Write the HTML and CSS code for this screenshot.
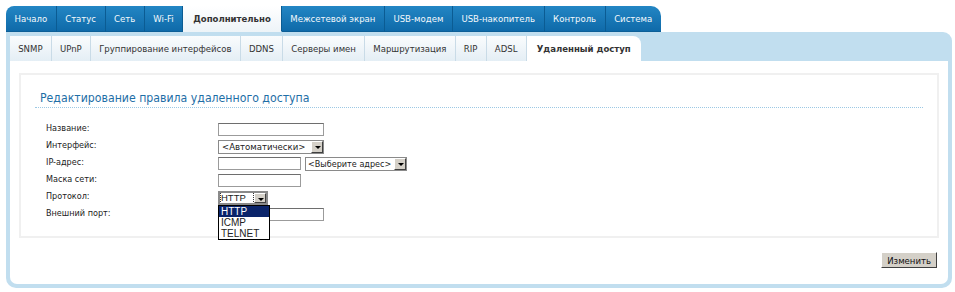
FILE: index.html
```html
<!DOCTYPE html>
<html lang="ru">
<head>
    <meta charset="UTF-8">
    <title>Удаленный доступ</title>
    <link rel="stylesheet" href="styles.css">
</head>
<body>
    <div class="page">
        <ul class="menu">
            <li>Начало</li>
            <li>Статус</li>
            <li>Сеть</li>
            <li>Wi-Fi</li>
            <li class="active">Дополнительно</li>
            <li>Межсетевой экран</li>
            <li>USB-модем</li>
            <li>USB-накопитель</li>
            <li>Контроль</li>
            <li class="last">Система</li>
        </ul>

        <div class="panel">
            <ul class="submenu">
                <li>SNMP</li>
                <li>UPnP</li>
                <li>Группирование интерфейсов</li>
                <li>DDNS</li>
                <li>Серверы имен</li>
                <li>Маршрутизация</li>
                <li>RIP</li>
                <li>ADSL</li>
                <li class="active">Удаленный доступ</li>
            </ul>

            <div class="content">
                <div class="box">
                    <h2>Редактирование правила удаленного доступа</h2>
                    <div class="form">
                        <div class="row">
                            <label>Название:</label>
                            <input type="text" class="field wide">
                        </div>
                        <div class="row">
                            <label>Интерфейс:</label>
                            <span class="select wide"><span class="val">&lt;Автоматически&gt;</span><span class="arrow"></span></span>
                        </div>
                        <div class="row">
                            <label>IP-адрес:</label>
                            <input type="text" class="field short">
                            <span class="select addr"><span class="val">&lt;Выберите адрес&gt;</span><span class="arrow"></span></span>
                        </div>
                        <div class="row">
                            <label>Маска сети:</label>
                            <input type="text" class="field short">
                        </div>
                        <div class="row">
                            <label>Протокол:</label>
                            <span class="select proto"><span class="val"><span class="dots">HTTP</span></span><span class="arrow"></span></span>
                            <ul class="dropdown">
                                <li class="sel">HTTP</li>
                                <li>ICMP</li>
                                <li>TELNET</li>
                            </ul>
                        </div>
                        <div class="row">
                            <label>Внешний порт:</label>
                            <input type="text" class="field wide">
                        </div>
                    </div>
                </div>
                <div class="actions">
                    <button class="btn">Изменить</button>
                </div>
            </div>
        </div>
    </div>
</body>
</html>
```

FILE: styles.css
```css
body {
    margin: 0;
    background: #fff;
    font-family: "DejaVu Sans Condensed", "DejaVu Sans", sans-serif;
    font-size: 9.5px;
    color: #222;
}
.page {
    padding: 6px 3px 0 6px;
}
ul {
    list-style: none;
    margin: 0;
    padding: 0;
}
.menu {
    display: flex;
    height: 26px;
}
.menu li {
    padding: 0 8.5px;
    line-height: 25px;
    color: #f4f9fc;
    background: linear-gradient(#2386c4, #0f6aa9);
    border-right: 1px solid #0b5c93;
    border-bottom: 1px solid #0d5f97;
}
.menu li:first-child {
    border-top-left-radius: 8px;
}
.menu li.last {
    border-top-right-radius: 10px;
    border-right: none;
}
.menu li.active {
    background: linear-gradient(#fff, #eef4f8);
    color: #333;
    font-weight: bold;
    border-bottom-color: #eef4f8;
    padding: 0 10px;
}
.panel {
    background: #c1deef;
    border-radius: 0 9px 10px 10px;
    padding: 4px;
}
.submenu {
    display: flex;
    height: 25px;
}
.submenu li {
    padding: 0 8.2px;
    line-height: 25px;
    color: #333;
    background: linear-gradient(#fafcfd, #e4eef5);
    border-right: 1px solid #c9dbe7;
}
.submenu li.active {
    background: #fff;
    font-weight: bold;
    border-right: none;
    border-top-right-radius: 8px;
    padding: 0 10px;
}
.content {
    background: #fff;
    border-radius: 0 0 7px 7px;
    padding: 12px 9px 16px 9px;
}
.box {
    border: 2px solid #f0f0f0;
    height: 161px;
    padding: 0 14px;
}
.box h2 {
    margin: 16px 0 0 0;
    padding: 0 0 1px 5px;
    font-size: 12.2px;
    font-weight: normal;
    color: #1e6ea6;
    line-height: 15px;
    border-bottom: 1px dotted #9cc8e4;
}
.form {
    padding: 13px 0 0 11px;
}
.row {
    display: flex;
    align-items: center;
    height: 17px;
    position: relative;
}
.row label {
    width: 172px;
    margin-top: -3px;
    font-size: 9px;
}
.field {
    height: 13px;
    box-sizing: border-box;
    border: 1px solid #9b9b9b;
    border-top-color: #6e6e6e;
    padding: 0;
    margin: 0;
    background: #fff;
}
.wide {
    width: 106px;
}
.short {
    width: 83px;
}
.select {
    display: flex;
    height: 14px;
    box-sizing: border-box;
    border: 1px solid #8a8a8a;
    background: #fff;
    font-size: 9.5px;
}
.select .val {
    flex: 1;
    line-height: 12px;
    padding-left: 3px;
    white-space: nowrap;
    overflow: hidden;
}
.select .arrow {
    width: 12px;
    background: #d4d0c8;
    border: 1px solid;
    border-color: #fff #404040 #404040 #fff;
    box-sizing: border-box;
    position: relative;
}
.select .arrow::after {
    content: "";
    position: absolute;
    left: 3px;
    top: 4px;
    border-left: 3px solid transparent;
    border-right: 3px solid transparent;
    border-top: 3px solid #000;
}
.addr {
    width: 102px;
    margin-left: 4px;
    font-size: 9px;
}
.addr .val {
    padding-left: 2px;
}
.proto {
    width: 50px;
    border: 2px solid #8a8a8a;
}
.proto .val {
    padding-left: 1px;
    line-height: 10px;
}
.dots {
    display: inline-block;
    outline: 1px dotted #333;
    width: 32px;
    font-family: "Liberation Sans", sans-serif;
}
.dropdown {
    position: absolute;
    left: 172px;
    top: 16px;
    width: 50px;
    border: 1px solid #000;
    background: #fff;
    z-index: 2;
    font-family: "Liberation Sans", sans-serif;
    font-size: 10px;
}
.dropdown li {
    line-height: 11px;
    padding-left: 2px;
    color: #222;
}
.dropdown li.sel {
    background: #0a246a;
    color: #fff;
}
.actions {
    display: flex;
    justify-content: flex-end;
    margin-top: 14px;
    padding-right: 2px;
}
.btn {
    height: 16px;
    padding: 0 5px;
    font-family: inherit;
    font-size: 9.5px;
    background: #d4d0c8;
    border: 1px solid;
    border-color: #fff #404040 #404040 #fff;
    color: #111;
    line-height: 13px;
}
```
